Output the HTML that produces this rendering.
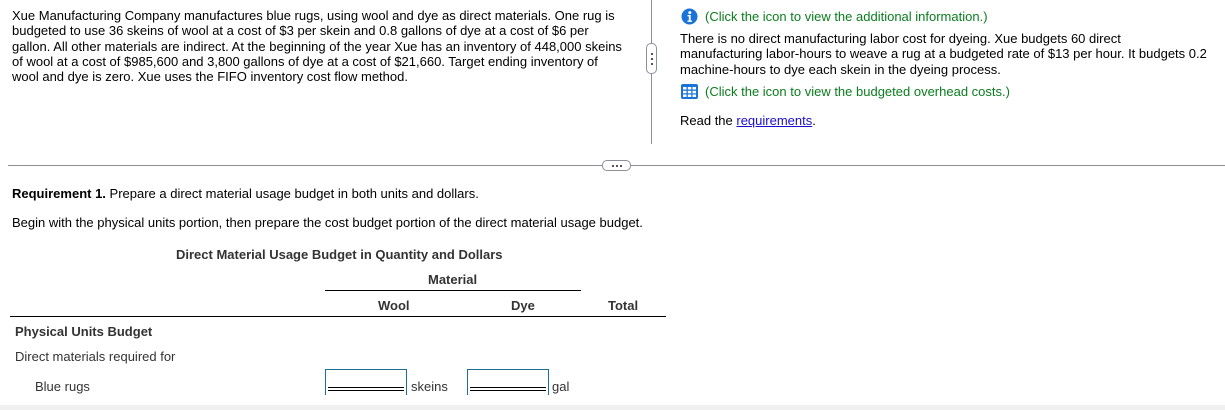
<!DOCTYPE html>
<html><head><style>
body{margin:0;width:1225px;height:410px;position:relative;overflow:hidden;background:#fff;font-family:"Liberation Sans",Arial,sans-serif;font-size:13px;color:#000}
.a{position:absolute;white-space:nowrap}
.p{line-height:15.3px}
.g{color:#0a7d1e}
.t{color:#333}
.dot{position:absolute;width:2px;height:2px;background:#555;left:50%;margin-left:-1px}
</style></head><body>
<div class="a p" style="left:12px;top:8px">Xue Manufacturing Company manufactures blue rugs, using wool and dye as direct materials. One rug is<br>budgeted to use 36 skeins of wool at a cost of $3 per skein and 0.8 gallons of dye at a cost of $6 per<br>gallon. All other materials are indirect. At the beginning of the year Xue has an inventory of 448,000 skeins<br>of wool at a cost of $985,600 and 3,800 gallons of dye at a cost of $21,660. Target ending inventory of<br>wool and dye is zero. Xue uses the FIFO inventory cost flow method.</div>

<div class="a" style="left:651px;top:0;width:1px;height:144px;background:#8a8f99"></div>
<div class="a" style="left:646px;top:43px;width:9px;height:29px;border:1px solid #8a8f99;border-radius:5px;background:#fff"><div class="dot" style="top:9px"></div><div class="dot" style="top:14px"></div><div class="dot" style="top:19px"></div></div>

<svg class="a" style="left:681px;top:8px" width="17" height="17" viewBox="0 0 17 17"><circle cx="8.5" cy="8.5" r="8" fill="#1a73d9"/><circle cx="8.8" cy="4.6" r="1.5" fill="#fff"/><path d="M6.5 7h3.2v5.5h1.3v1.4H6.5v-1.4h1.3V8.4H6.5z" fill="#fff"/></svg>
<div class="a g" style="left:705px;top:9px">(Click the icon to view the additional information.)</div>
<div class="a p" style="left:680px;top:31px">There is no direct manufacturing labor cost for dyeing. Xue budgets 60 direct<br>manufacturing labor-hours to weave a rug at a budgeted rate of $13 per hour. It budgets 0.2<br>machine-hours to dye each skein in the dyeing process.</div>
<svg class="a" style="left:681px;top:84px" width="17" height="15" viewBox="0 0 17 15"><rect x="0" y="0" width="17" height="15" rx="2" fill="#1a73d9"/><g fill="#fff"><rect x="2" y="3" width="3.5" height="2.5"/><rect x="6.8" y="3" width="3.5" height="2.5"/><rect x="11.5" y="3" width="3.5" height="2.5"/><rect x="2" y="6.8" width="3.5" height="2.5"/><rect x="6.8" y="6.8" width="3.5" height="2.5"/><rect x="11.5" y="6.8" width="3.5" height="2.5"/><rect x="2" y="10.5" width="3.5" height="2.5"/><rect x="6.8" y="10.5" width="3.5" height="2.5"/><rect x="11.5" y="10.5" width="3.5" height="2.5"/></g></svg>
<div class="a g" style="left:705px;top:84px">(Click the icon to view the budgeted overhead costs.)</div>
<div class="a" style="left:680px;top:113px">Read the <span style="color:#1a0dcc;text-decoration:underline">requirements</span>.</div>

<div class="a" style="left:8px;top:165px;width:1217px;height:1px;background:#8a8f99"></div>
<div class="a" style="left:602px;top:160px;width:27px;height:9px;border:1px solid #8a8f99;border-radius:5px;background:#fff"><div style="position:absolute;top:4px;left:9px;width:2px;height:2px;background:#555"></div><div style="position:absolute;top:4px;left:13px;width:2px;height:2px;background:#555"></div><div style="position:absolute;top:4px;left:17px;width:2px;height:2px;background:#555"></div></div>

<div class="a" style="left:12px;top:186px"><b>Requirement 1.</b> Prepare a direct material usage budget in both units and dollars.</div>
<div class="a" style="left:12px;top:215px">Begin with the physical units portion, then prepare the cost budget portion of the direct material usage budget.</div>
<div class="a t" style="left:176px;top:247px;font-weight:bold">Direct Material Usage Budget in Quantity and Dollars</div>
<div class="a t" style="left:428px;top:272px;font-weight:bold">Material</div>
<div class="a" style="left:325px;top:290px;width:256px;height:1px;background:#000"></div>
<div class="a t" style="left:378px;top:298px;font-weight:bold">Wool</div>
<div class="a t" style="left:511px;top:298px;font-weight:bold">Dye</div>
<div class="a t" style="left:608px;top:298px;font-weight:bold">Total</div>
<div class="a" style="left:10px;top:316px;width:656px;height:1px;background:#000"></div>
<div class="a t" style="left:15px;top:324px;font-weight:bold">Physical Units Budget</div>
<div class="a t" style="left:15px;top:349px">Direct materials required for</div>
<div class="a t" style="left:35px;top:379px">Blue rugs</div>
<div class="a" style="left:325px;top:369px;width:80px;height:25px;border:1px solid #1b6f96;border-bottom:none"></div>
<div class="a" style="left:328px;top:387px;width:76px;height:2px;border-top:1px solid #000;border-bottom:1px solid #000"></div>
<div class="a t" style="left:411px;top:379px">skeins</div>
<div class="a" style="left:467px;top:369px;width:80px;height:25px;border:1px solid #1b6f96;border-bottom:none"></div>
<div class="a" style="left:470px;top:387px;width:76px;height:2px;border-top:1px solid #000;border-bottom:1px solid #000"></div>
<div class="a t" style="left:552px;top:379px">gal</div>
<div class="a" style="left:0;top:405px;width:1225px;height:5px;background:#f0f0f0"></div>
</body></html>
